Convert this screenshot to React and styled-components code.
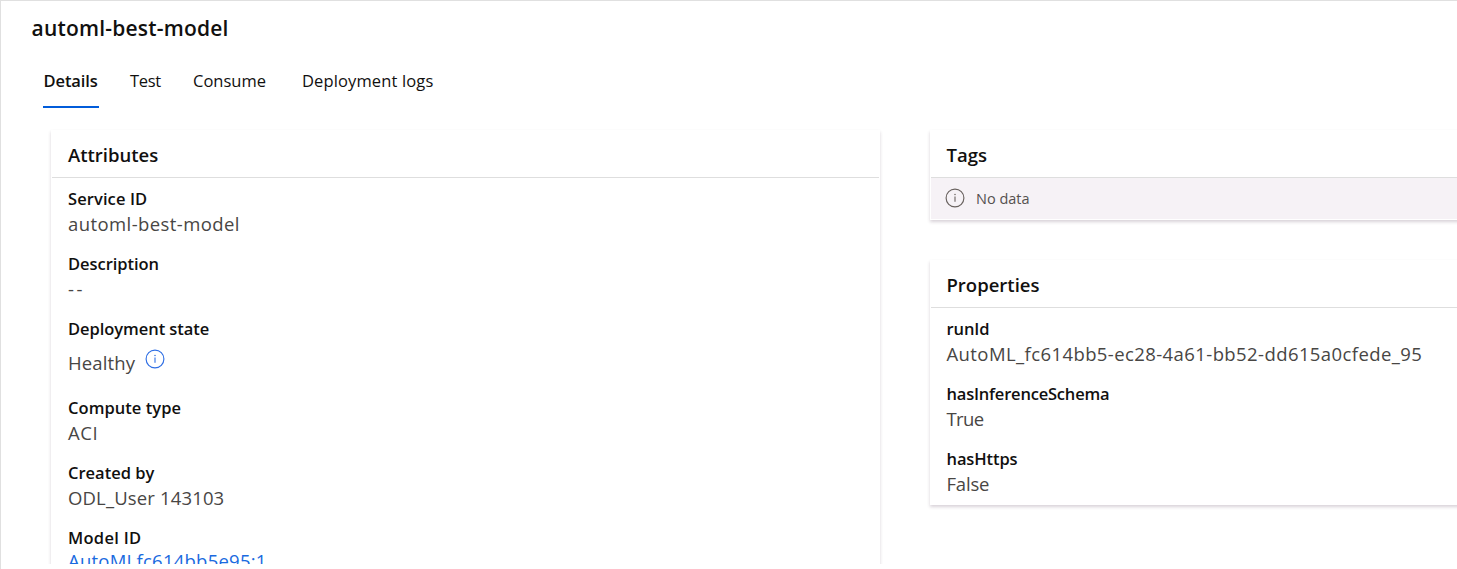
import React from "react";
import styled, { createGlobalStyle } from "styled-components";

const GlobalStyle = createGlobalStyle`
  * { box-sizing: border-box; }
  body {
    margin: 0;
    background: #fff;
    font-family: "Open Sans", "Noto Sans", sans-serif;
    color: #11100f;
    overflow: hidden;
  }
`;

const Page = styled.main`
  height: 569px;
  padding-left: 30.5px;
  border-top: 1px solid #e0e0e0;
  border-left: 1px solid #e0e0e0;
  overflow: hidden;
`;

const Text = styled.span`
  letter-spacing: ${(p) => p.$track || 0}px;
  white-space: nowrap;
`;

const Title = styled.h1`
  margin: 0;
  padding-top: 12px;
  font-size: 21px;
  font-weight: 600;
  line-height: 30px;
  height: 54px;
`;

const TabList = styled.nav`
  display: flex;
  height: 53px;
  padding-left: 11px;
`;

const Tab = styled.a`
  height: 53px;
  width: ${(p) => p.$width}px;
  margin-right: ${(p) => p.$gap}px;
  font-size: 16.5px;
  line-height: 52px;
  font-weight: ${(p) => (p.$active ? 600 : 400)};
  border-bottom: 2px solid ${(p) => (p.$active ? "#015cda" : "transparent")};
`;

const TabText = styled(Text)`
  margin-left: ${(p) => p.$indent || 0}px;
`;

const Content = styled.div`
  display: flex;
  align-items: flex-start;
  gap: 49.5px;
  height: 456px;
  padding: 22px 0 0 19.5px;
  overflow: hidden;
`;

const Column = styled.div`
  display: flex;
  flex: none;
  flex-direction: column;
  gap: 40px;
  width: ${(p) => p.$width}px;
`;

const Card = styled.section`
  height: ${(p) => p.$height}px;
  padding: 0 1px;
  background: #fff;
  box-shadow: 0 1.6px 3.2px rgba(60, 30, 60, 0.2);
`;

const CardHeader = styled.h2`
  margin: 0;
  height: 48px;
  padding-left: 16px;
  border-bottom: 1px solid #dedede;
  font-size: 18.5px;
  font-weight: 600;
  line-height: 49px;
`;

const Fields = styled.dl`
  margin: 0;
  padding: 8px 0 0 16px;
`;

const Field = styled.div`
  height: ${(p) => (p.$tall ? 79 : 65)}px;
`;

const Name = styled.dt`
  height: 26px;
  font-size: 16.5px;
  font-weight: 600;
  line-height: 25px;
`;

const Value = styled.dd`
  display: flex;
  gap: 10px;
  margin: 0;
  padding-top: ${(p) => (p.$tall ? 9 : 0)}px;
  font-size: 18.5px;
  line-height: ${(p) => (p.$link ? 20 : 23)}px;
  color: ${(p) => (p.$link ? "#1a6ae0" : "#484644")};
`;

const EmptyBar = styled.div`
  display: flex;
  align-items: center;
  gap: 11px;
  height: 41px;
  padding-left: 14.5px;
  background: #f6f2f6;
  color: #55504f;
  font-size: 14.5px;
`;

const Icon = styled.svg`
  flex: none;
  width: 20px;
  height: 20px;
  margin-top: ${(p) => p.$top || 0}px;
  color: ${(p) => p.$color};
`;

const InfoIcon = ({ color, top }) => (
  <Icon viewBox="0 0 20 20" fill="none" $color={color} $top={top}>
    <circle cx="10" cy="10" r="8.9" stroke="currentColor" strokeWidth="1.15" />
    <path d="M10 8.4v5.4" stroke="currentColor" strokeWidth="1.1" />
    <circle cx="10" cy="6.4" r="0.75" fill="currentColor" />
  </Icon>
);

const tabs = [
  { label: "Details", width: 56, gap: 31.5, active: true, track: -0.1, indent: 1 },
  { label: "Test", width: 31, gap: 32, track: -0.3 },
  { label: "Consume", width: 75, gap: 34 },
  { label: "Deployment logs", width: 140, gap: 0, track: 0.13 },
];

const attributes = [
  { name: "Service ID", nameTrack: 0.1, value: "automl-best-model", valueTrack: 0.42 },
  { name: "Description", nameTrack: -0.05, value: "--", valueTrack: 2.5 },
  { name: "Deployment state", nameTrack: -0.05, value: "Healthy", valueTrack: 0.13, info: true },
  { name: "Compute type", nameTrack: 0.05, value: "ACI", valueTrack: 0.6 },
  { name: "Created by", value: "ODL_User 143103", valueTrack: 0.15 },
  { name: "Model ID", nameTrack: 0.3, value: "AutoMLfc614bb5e95:1", valueTrack: 0.24, link: true },
];

const properties = [
  {
    name: "runId",
    nameTrack: -0.1,
    value: "AutoML_fc614bb5-ec28-4a61-bb52-dd615a0cfede_95",
    valueTrack: 0.41,
  },
  { name: "hasInferenceSchema", nameTrack: -0.2, value: "True", valueTrack: -0.6 },
  { name: "hasHttps", nameTrack: -0.1, value: "False", valueTrack: -0.2 },
];

const FieldList = ({ items }) => (
  <Fields>
    {items.map((f) => (
      <Field key={f.name} $tall={f.info}>
        <Name><Text $track={f.nameTrack}>{f.name}</Text></Name>
        <Value $tall={f.info} $link={f.link}>
          <Text $track={f.valueTrack}>{f.value}</Text>
          {f.info && <InfoIcon color="#2f6fe4" top={-2} />}
        </Value>
      </Field>
    ))}
  </Fields>
);

export default function App() {
  return (
    <>
      <GlobalStyle />
      <Page>
        <Title><Text $track={0.2}>automl-best-model</Text></Title>
        <TabList>
          {tabs.map((t) => (
            <Tab key={t.label} $width={t.width} $gap={t.gap} $active={t.active}>
              <TabText $track={t.track} $indent={t.indent}>{t.label}</TabText>
            </Tab>
          ))}
        </TabList>
        <Content>
          <Column $width={829}>
            <Card $height={500}>
              <CardHeader><Text>Attributes</Text></CardHeader>
              <FieldList items={attributes} />
            </Card>
          </Column>
          <Column $width={560}>
            <Card $height={90}>
              <CardHeader><Text>Tags</Text></CardHeader>
              <EmptyBar>
                <InfoIcon color="#69625f" top={-1} />
                <Text>No data</Text>
              </EmptyBar>
            </Card>
            <Card $height={245}>
              <CardHeader><Text>Properties</Text></CardHeader>
              <FieldList items={properties} />
            </Card>
          </Column>
        </Content>
      </Page>
    </>
  );
}
